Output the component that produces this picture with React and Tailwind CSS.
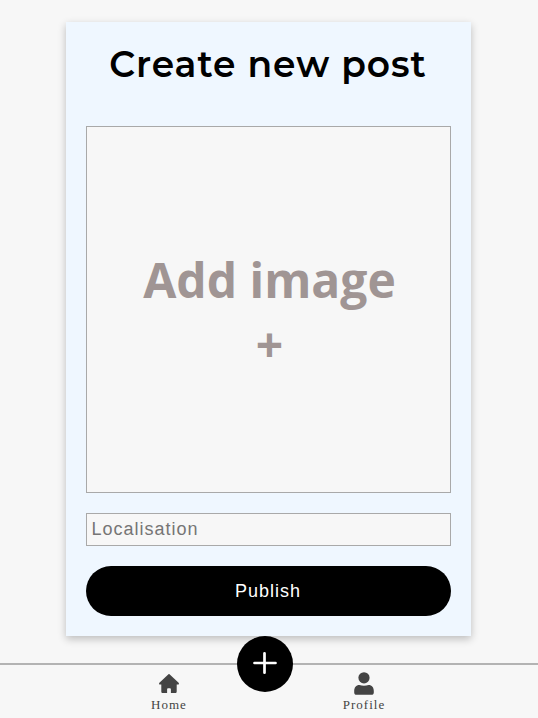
export default function App() {
  return (
    <div className="flex h-[718px] w-[538px] flex-col overflow-hidden bg-[#f7f7f7] pt-[22px]">
      <main className="ml-[66px] flex h-[614px] w-[405px] shrink-0 flex-col bg-[#eff7ff] px-5 pb-5 shadow-[0_3px_8px_rgba(0,0,0,0.24)]">
        <h1 className="flex h-[104px] justify-center whitespace-nowrap pt-[20px] pr-px font-['Montserrat','Lato',sans-serif] text-[36px] leading-[44px] font-semibold tracking-[1px] text-black">
          Create new post
        </h1>
        <button className="flex h-[367px] shrink-0 flex-col items-center justify-center border border-[#a9a9a9] bg-[#f7f7f7] pt-1 pl-[2px] font-['Open_Sans',sans-serif] text-[48px] leading-[64px] font-bold text-[#a09594]">
          <span>Add image</span>
          <span>+</span>
        </button>
        <input
          placeholder="Localisation"
          className="mt-5 h-[33px] shrink-0 border border-[#a9a9a9] bg-[#f7f7f7] px-[4.5px] font-['Liberation_Sans',sans-serif] text-[18px] tracking-[1px] placeholder:text-[#757575]"
        />
        <button className="mt-5 h-[50px] shrink-0 rounded-full bg-black pr-px font-['Liberation_Sans',sans-serif] text-[18px] tracking-[1px] text-white">
          Publish
        </button>
      </main>
      <nav className="relative mt-[27px] flex h-[55px] shrink-0 border-t-2 border-[#b3b3b3] font-['Liberation_Serif',serif] text-[13px] leading-[15px] tracking-[1px] text-[#444]">
        <a className="ml-[139px] flex w-[60px] flex-col items-center pt-[9px]">
          <svg width="20" height="20" viewBox="0 0 20 20" fill="#444">
            <path d="M9.200.4a1.100 1.100 0 0 1 1.600 0l8.800 8.400c.7.8.3 1.800-.7 1.800h-1.200v6.900c0 1-.6 1.600-1.500 1.600h-4.300v-3.600c0-.8-.5-1.300-1.200-1.300h-1.400c-.7 0-1.200.5-1.200 1.300v3.600H3.800c-.9 0-1.500-.6-1.500-1.600v-6.900H1.100c-1 0-1.400-1-.7-1.800z" />
          </svg>
          <span className="mt-[3px]">Home</span>
        </a>
        <a className="ml-[135px] flex w-[60px] flex-col items-center pt-[7px]">
          <svg width="20" height="23" viewBox="0 0 20 23" fill="#444">
            <circle cx="10" cy="5.8" r="5.6" />
            <path d="M5.400 13c1.500.6 2.900.8 4.600.8s3.100-.2 4.600-.8c3.300 0 5.200 2.600 5.200 6v1.500c0 1.500-.9 2.300-2.300 2.300h-15C1.100 22.800.2 22 .2 20.500V19c0-3.400 1.900-6 5.200-6z" />
          </svg>
          <span className="mt-[2px]">Profile</span>
        </a>
        <button aria-label="New post" className="absolute -top-[29px] left-[237px] flex h-14 w-14 items-center justify-center rounded-full bg-black">
          <svg width="56" height="56" viewBox="0 0 56 56" fill="none" stroke="#fff" strokeWidth="2.7" strokeLinecap="round">
            <path d="M17.500 27H38.500M27.500 17.300V36.700" />
          </svg>
        </button>
      </nav>
    </div>
  );
}
